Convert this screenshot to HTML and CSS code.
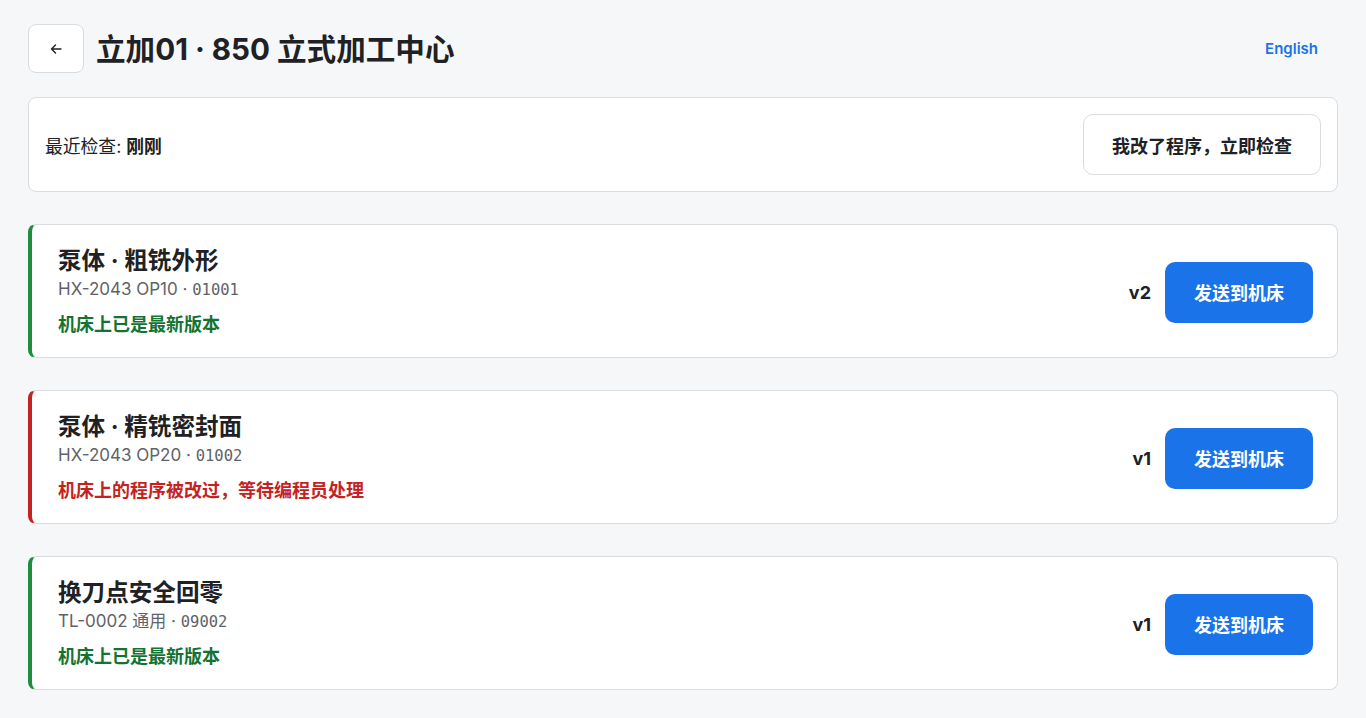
FILE: index.html
```html
<!DOCTYPE html>
<html lang="zh-CN">
<head>
<meta charset="utf-8">
<title>立加01 · 850 立式加工中心</title>
<link rel="stylesheet" href="styles.css">
</head>
<body>
<div class="page">
  <header class="topbar">
    <button class="back" aria-label="返回">
      <svg width="14" height="14" viewBox="0 0 14 14" fill="none" stroke="#202124" stroke-width="1.4" stroke-linecap="round" stroke-linejoin="round"><path d="M12 7H2.5M6.5 3L2.5 7l4 4"/></svg>
    </button>
    <h1 class="title">立加01 · 850 立式加工中心</h1>
    <button class="lang">English</button>
  </header>

  <section class="summary">
    <div class="last-check">最近检查: <strong>刚刚</strong></div>
    <button class="btn-outline">我改了程序，立即检查</button>
  </section>

  <section class="list">
    <article class="card ok">
      <div class="info">
        <div class="name">泵体 · 粗铣外形</div>
        <div class="meta">HX-2043 OP10 · <span class="mono">01001</span></div>
        <div class="status">机床上已是最新版本</div>
      </div>
      <div class="actions">
        <span class="ver">v2</span>
        <button class="btn-primary">发送到机床</button>
      </div>
    </article>

    <article class="card bad">
      <div class="info">
        <div class="name">泵体 · 精铣密封面</div>
        <div class="meta">HX-2043 OP20 · <span class="mono">01002</span></div>
        <div class="status">机床上的程序被改过，等待编程员处理</div>
      </div>
      <div class="actions">
        <span class="ver">v1</span>
        <button class="btn-primary">发送到机床</button>
      </div>
    </article>

    <article class="card ok">
      <div class="info">
        <div class="name">换刀点安全回零</div>
        <div class="meta">TL-0002 通用 · <span class="mono">09002</span></div>
        <div class="status">机床上已是最新版本</div>
      </div>
      <div class="actions">
        <span class="ver">v1</span>
        <button class="btn-primary">发送到机床</button>
      </div>
    </article>
  </section>
</div>
</body>
</html>
```

FILE: styles.css
```css
* { box-sizing: border-box; }
html, body {
  margin: 0;
  background: #f6f7f9;
  color: #202124;
  font-family: "Inter", "Noto Sans CJK SC", sans-serif;
}
button { font-family: inherit; cursor: pointer; }

.page {
  padding: 24px 28px;
  display: flex;
  flex-direction: column;
}

.topbar {
  display: flex;
  align-items: center;
  gap: 12px;
  height: 49px;
}
.back {
  width: 56px;
  height: 49px;
  background: #fff;
  border: 1px solid #dadce0;
  border-radius: 8px;
  display: flex;
  align-items: center;
  justify-content: center;
  padding: 0;
}
.title {
  margin: 0;
  font-size: 29.6px;
  font-weight: 700;
  line-height: 36px;
  flex: 1;
}
.lang {
  background: none;
  border: none;
  color: #1a73e8;
  font-size: 15px;
  font-weight: 600;
  padding: 8px 20px;
}

.summary {
  margin-top: 24px;
  background: #fff;
  border: 1px solid #dadce0;
  border-radius: 8px;
  padding: 16px;
  display: flex;
  align-items: center;
  justify-content: space-between;
}
.last-check {
  font-size: 17.8px;
}
.last-check strong { font-weight: 700; }
.btn-outline {
  height: 61px;
  padding: 0 28px;
  background: #fff;
  border: 1px solid #dadce0;
  border-radius: 10px;
  font-size: 18px;
  font-weight: 700;
  color: #202124;
}

.list {
  margin-top: 32px;
  display: flex;
  flex-direction: column;
  gap: 32px;
}
.card {
  background: #fff;
  border: 1px solid #dadce0;
  border-left: 4px solid #1e8e3e;
  border-radius: 8px;
  padding: 21px 24px 19px 26px;
  display: flex;
  align-items: center;
  justify-content: space-between;
}
.card.bad { border-left-color: #c5221f; }

.info { display: flex; flex-direction: column; }
.name {
  font-size: 23.6px;
  font-weight: 700;
  line-height: 30px;
}
.meta {
  margin-top: 2px;
  font-size: 17px;
  line-height: 22px;
  color: #5f6368;
}
.mono {
  font-family: "DejaVu Sans Mono", monospace;
  font-size: 15.5px;
}
.status {
  margin-top: 11px;
  font-size: 18px;
  line-height: 26px;
  font-weight: 700;
  color: #137333;
}
.card.bad .status { color: #c5221f; }

.actions {
  display: flex;
  align-items: center;
  gap: 14px;
}
.ver {
  font-size: 18px;
  font-weight: 700;
}
.btn-primary {
  height: 61px;
  padding: 0 29px;
  background: #1a73e8;
  color: #fff;
  border: none;
  border-radius: 10px;
  font-size: 18px;
  font-weight: 700;
}
```
